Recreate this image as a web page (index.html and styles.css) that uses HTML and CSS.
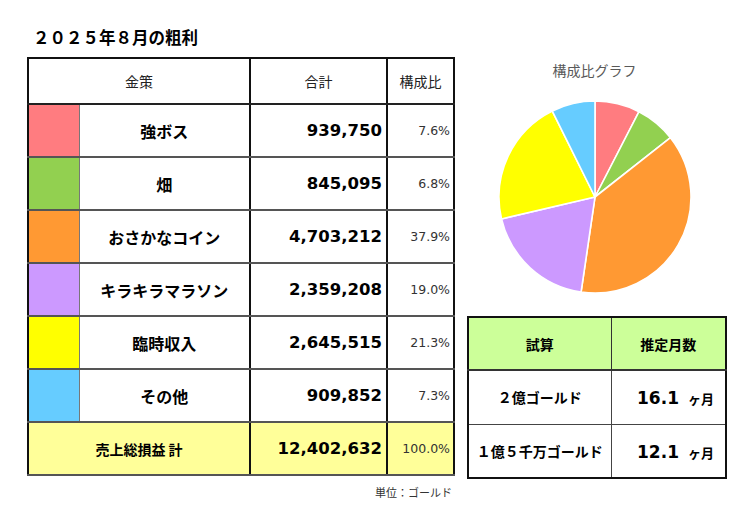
FILE: index.html
```html
<!DOCTYPE html>
<html lang="ja">
<head>
<meta charset="utf-8">
<title>2025年8月の粗利</title>
<link rel="stylesheet" href="styles.css">
</head>
<body>
<div class="page">
  <section class="left">
    <h1 class="title">２０２５年８月の粗利</h1>
    <table class="main">
      <colgroup>
        <col class="c-color"><col class="c-name"><col class="c-total"><col class="c-pct">
      </colgroup>
      <thead>
        <tr>
          <th colspan="2">金策</th>
          <th>合計</th>
          <th>構成比</th>
        </tr>
      </thead>
      <tbody>
        <tr><td class="sw pink"></td><td class="name">強ボス</td><td class="num">939,750</td><td class="pct">7.6%</td></tr>
        <tr><td class="sw green"></td><td class="name">畑</td><td class="num">845,095</td><td class="pct">6.8%</td></tr>
        <tr><td class="sw orange"></td><td class="name">おさかなコイン</td><td class="num">4,703,212</td><td class="pct">37.9%</td></tr>
        <tr><td class="sw purple"></td><td class="name">キラキラマラソン</td><td class="num">2,359,208</td><td class="pct">19.0%</td></tr>
        <tr><td class="sw yellow"></td><td class="name">臨時収入</td><td class="num">2,645,515</td><td class="pct">21.3%</td></tr>
        <tr><td class="sw blue"></td><td class="name">その他</td><td class="num">909,852</td><td class="pct">7.3%</td></tr>
        <tr class="sum"><td colspan="2" class="name sumname">売上総損益 計</td><td class="num">12,402,632</td><td class="pct">100.0%</td></tr>
      </tbody>
    </table>
    <p class="unit">単位：ゴールド</p>
  </section>
  <section class="right">
    <h2 class="chart-title">構成比グラフ</h2>
    <svg class="pie" width="200" height="200" viewBox="0 0 200 200">
      <g stroke="#fff" stroke-width="1.6" stroke-linejoin="round">
        <path fill="#ff7c80" d="M100,100 L100,4 A96,96 0 0 1 144.0,14.68 Z"/>
        <path fill="#92d050" d="M100,100 L144.0,14.68 A96,96 0 0 1 175.45,40.64 Z"/>
        <path fill="#ff9933" d="M100,100 L175.45,40.64 A96,96 0 0 1 86.11,194.99 Z"/>
        <path fill="#cc99ff" d="M100,100 L86.11,194.99 A96,96 0 0 1 6.53,121.93 Z"/>
        <path fill="#ffff00" d="M100,100 L6.53,121.93 A96,96 0 0 1 57.30,14.02 Z"/>
        <path fill="#66ccff" d="M100,100 L57.30,14.02 A96,96 0 0 1 100,4 Z"/>
      </g>
    </svg>
    <table class="est">
      <thead>
        <tr><th>試算</th><th>推定月数</th></tr>
      </thead>
      <tbody>
        <tr><td class="label">２億ゴールド</td><td class="months"><span class="mnum">16.1</span><span class="munit">ヶ月</span></td></tr>
        <tr><td class="label">１億５千万ゴールド</td><td class="months"><span class="mnum">12.1</span><span class="munit">ヶ月</span></td></tr>
      </tbody>
    </table>
  </section>
</div>
</body>
</html>
```

FILE: styles.css
```css
* { box-sizing: border-box; }
html, body { margin: 0; padding: 0; background: #fff; }
body {
  font-family: "Noto Sans CJK JP", "Noto Sans", sans-serif;
  color: #000;
}
.page {
  display: flex;
  gap: 14px;
  padding: 27px 0 0 27px;
  width: 750px;
  height: 523px;
}
.left { width: 426px; }
.title {
  margin: 0 0 10px 6px;
  font-size: 16.5px;
  line-height: 20px;
  font-weight: bold;
}
table { border-collapse: collapse; table-layout: fixed; }
.main {
  width: 426px;
  border: 2px solid #111;
}
.c-color { width: 51px; }
.c-name { width: 171px; }
.c-total { width: 137px; }
.c-pct { width: 67px; }
.main th {
  height: 46px;
  font-size: 14px;
  font-weight: normal;
  color: #222;
  text-align: center;
  border: 2px solid #111;
  border-bottom: 2px solid #222;
  padding: 0;
}
.main td {
  height: 53px;
  padding: 0;
  border-top: 2px solid #555;
  border-bottom: 2px solid #555;
  border-left: 2px solid #111;
  border-right: 2px solid #111;
}
.main td.sw { border-right: 1px solid #777; }
.main td.sw + td.name { border-left: 1px solid #777; }
.pink { background: #ff7c80; }
.green { background: #92d050; }
.orange { background: #ff9933; }
.purple { background: #cc99ff; }
.yellow { background: #ffff00; }
.blue { background: #66ccff; }
.name {
  text-align: center;
  font-size: 16px;
  font-weight: bold;
}
.num {
  text-align: right;
  padding-right: 4px !important;
  font-family: "DejaVu Sans", Verdana, sans-serif;
  font-weight: bold;
  font-size: 16.5px;
}
.pct {
  text-align: right;
  padding-right: 3px !important;
  font-family: "DejaVu Sans", Verdana, sans-serif;
  font-size: 12.5px;
  color: #333;
}
.sum td { background: #ffff99; border-top: 2px solid #111 !important; }
.main td.sumname { font-size: 14px; }
.unit {
  margin: 9px 1px 0 0;
  text-align: right;
  font-size: 11px;
  line-height: 14px;
  color: #333;
}
.right {
  width: 260px;
  display: flex;
  flex-direction: column;
}
.chart-title {
  margin: 33px 0 0 0;
  text-align: center;
  font-size: 14px;
  line-height: 20px;
  font-weight: normal;
  color: #595959;
  padding-right: 5px;
}
.pie {
  display: block;
  margin: 17px 0 0 28px;
}
.est {
  margin-top: 19px;
  width: 260px;
  border: 2px solid #111;
}
.est th {
  height: 53px;
  background: #ccff99;
  font-size: 14px;
  font-weight: bold;
  border: 1px solid #333;
  border-bottom: 2px solid #333;
  padding: 0;
}
.est th:first-child, .est td:first-child { width: 143px; }
.est td {
  height: 54px;
  border: 1px solid #444;
  padding: 0;
}
.label {
  text-align: center;
  font-size: 14px;
  font-weight: bold;
}
.months {
  text-align: right;
  padding-right: 11px !important;
  white-space: nowrap;
}
.mnum {
  font-family: "DejaVu Sans", Verdana, sans-serif;
  font-weight: bold;
  font-size: 17px;
}
.munit {
  margin-left: 9px;
  font-size: 13px;
  font-weight: bold;
}
```
